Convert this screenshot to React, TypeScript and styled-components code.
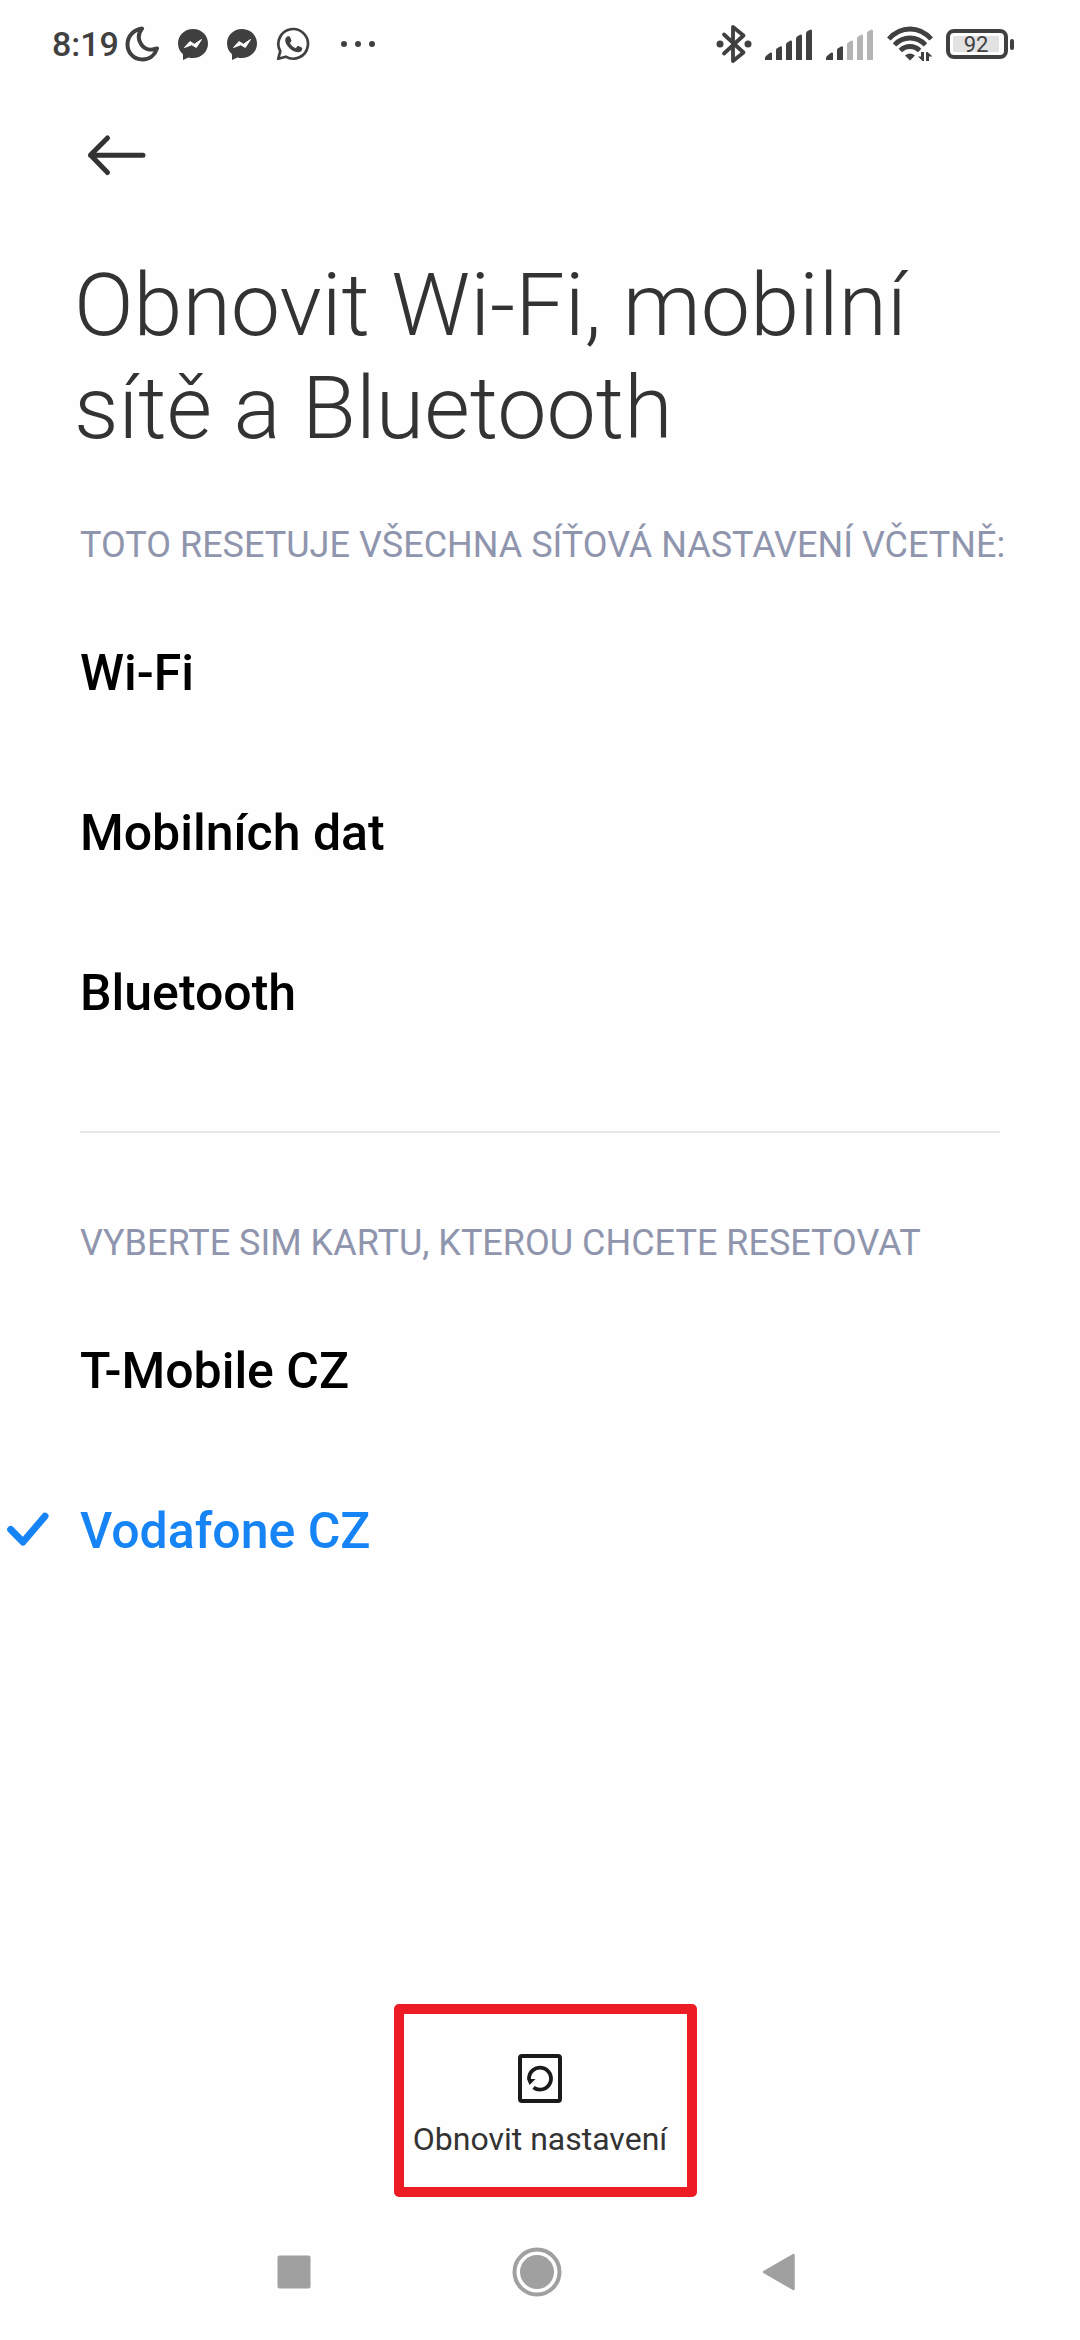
import React, { useState } from "react";
import styled, { createGlobalStyle } from "styled-components";

const GlobalStyle = createGlobalStyle`
  *, *::before, *::after { box-sizing: border-box; }
  html, body, #root { height: 100%; }
  body {
    margin: 0;
    background: #fefefe;
    font-family: Roboto, "Noto Sans", sans-serif;
    color: #333333;
  }
  button { font: inherit; color: inherit; background: none; border: 0; padding: 0; cursor: pointer; }
  svg { display: block; flex: none; }
`;

const Screen = styled.div`
  display: flex;
  flex-direction: column;
  min-height: 100vh;
`;

const StatusBar = styled.header`
  display: flex;
  justify-content: space-between;
  align-items: center;
  height: 88px;
  padding: 0 66px 0 52px;
  color: #404040;
`;

const StatusGroup = styled.div<{ $gap: number }>`
  display: flex;
  align-items: center;
  gap: ${(p) => p.$gap}px;
`;

const Clock = styled.time`
  font-size: 34px;
  font-weight: 500;
  line-height: 40px;
`;

const ClockGroup = styled.div`
  display: flex;
  align-items: center;
  gap: 6px;
`;

const More = styled.div`
  padding-left: 12px;
`;

const Battery = styled.div`
  display: flex;
  align-items: center;
  gap: 2px;
`;

const BatteryBody = styled.div`
  width: 62px;
  height: 30px;
  padding: 3px;
  border: 4px solid #404040;
  border-radius: 8px;
`;

const BatteryLevel = styled.div`
  display: flex;
  justify-content: center;
  width: 46px;
  height: 16px;
  background: #e2e2e2;
  font-size: 22px;
  line-height: 18px;
`;

const BatteryTip = styled.div`
  width: 4px;
  height: 11px;
  border-radius: 2px;
  background: #404040;
`;

const Toolbar = styled.nav`
  display: flex;
  padding: 44px 84px 0;
`;

const IconButton = styled.button`
  display: flex;
  align-items: center;
  justify-content: center;
`;

const Title = styled.h1`
  margin: 0;
  padding: 75px 74px 0;
  font-size: 88px;
  font-weight: 300;
  line-height: 103px;
`;

const Content = styled.main`
  flex: 1;
  padding-top: 62px;
`;

const Section = styled.section`
  display: flex;
  flex-direction: column;
`;

const SectionLabel = styled.h2`
  margin: 0;
  padding: 0 60px 0 80px;
  font-size: 36px;
  font-weight: 400;
  line-height: 48px;
  color: #8f95ad;
`;

const List = styled.ul`
  margin: 0;
  padding: 24px 0 0;
  list-style: none;
`;

const Item = styled.li`
  display: flex;
  align-items: center;
  height: 160px;
  padding: 0 80px;
  font-size: 50px;
  font-weight: 500;
  color: #000000;
`;

const Divider = styled.hr`
  height: 2px;
  margin: 58px 80px 86px;
  border: 0;
  background: #e6e6e6;
`;

const Option = styled.label<{ $checked: boolean }>`
  display: flex;
  align-items: center;
  height: 160px;
  padding-right: 80px;
  font-size: 50px;
  font-weight: 500;
  color: ${(p) => (p.$checked ? "#1684f5" : "#000000")};
  cursor: pointer;
`;

const Radio = styled.input`
  flex: none;
  appearance: none;
  width: 0;
  height: 0;
  margin: 0;
`;

const CheckSlot = styled.span`
  flex: none;
  width: 80px;
  padding-left: 6px;
`;

const SimList = styled.div`
  padding-top: 24px;
`;

const Actions = styled.footer`
  display: flex;
  justify-content: center;
`;

const ResetButton = styled.button`
  position: relative;
  display: flex;
  flex-direction: column;
  align-items: center;
  gap: 16px;
  padding: 50px 19px 39px;
  font-size: 32px;
  line-height: 38px;
`;

const Highlight = styled.span`
  position: absolute;
  inset: 0 -11px 0 0;
  border: 10px solid #ed1c24;
  border-radius: 5px;
  pointer-events: none;
`;

const NavBar = styled.nav`
  display: flex;
  justify-content: space-between;
  align-items: center;
  height: 143px;
  padding: 7px 284px 0 277px;
`;

const BackArrow = () => (
  <svg width="62" height="46" viewBox="0 0 62 46" fill="none" stroke="#333333" strokeWidth="5" strokeLinecap="round" strokeLinejoin="round">
    <path d="M23.500 6 6.500 23 23.500 40.500M6.500 23.300H59" />
  </svg>
);

const Moon = () => (
  <svg width="34" height="36" viewBox="0 0 34 36" fill="none" stroke="#404040" strokeWidth="4" strokeLinejoin="round">
    <path d="M17 2.500C9 3.500 2.500 10 2.500 18.500 2.500 27 9 33.500 17.500 33.500 24.500 33.500 30 29 32 22.500 25 25 19 23 16 18 12.500 12.500 13.500 7 17 2.500Z" />
  </svg>
);

const Messenger = () => (
  <svg width="30" height="31" viewBox="0 0 30 31">
    <path fill="#404040" d="M15 0C6.500 0 0 6.300 0 14.500 0 18.800 1.800 22.500 5 25.200V31L10.500 28.500C12 28.900 13.500 29 15 29 23.500 29 30 22.700 30 14.500S23.500 0 15 0Z" />
    <path fill="#fefefe" stroke="#fefefe" strokeWidth="1" strokeLinejoin="round" d="M6.500 18.500 12 12.500 16.300 15.300 23.500 10.500 18.300 18.500 13.700 15.800Z" />
  </svg>
);

const WhatsApp = () => (
  <svg width="34" height="34" viewBox="0 0 34 34">
    <path fill="none" stroke="#404040" strokeWidth="2.700" strokeLinejoin="round" d="M2.200 31.800 4.300 24.200A14.800 14.800 0 1 1 9.800 29.700Z" />
    <path fill="#404040" d="M11.700 9.200h1.300c.5 0 .8.300 1 .7l1.400 3.300c.2.500 0 .9-.3 1.300l-1.200 1.400c1.400 2.500 3.300 4.200 5.900 5.300l1.500-1.900c.3-.4.700-.5 1.200-.3l3.200 1.600c.5.200.7.600.6 1.100-.2 2.300-2.300 3.700-4.600 3.600-5.900-.6-12.100-6.600-12.500-11.800 0-1.700.9-3.800 2.500-4.300Z" />
  </svg>
);

const Dots = () => (
  <svg width="34" height="8" viewBox="0 0 34 8" fill="#404040">
    <circle cx="3" cy="4" r="3" />
    <circle cx="17" cy="4" r="3" />
    <circle cx="31" cy="4" r="3" />
  </svg>
);

const Bluetooth = () => (
  <svg width="36" height="40" viewBox="0 0 36 40">
    <path fill="none" stroke="#404040" strokeWidth="3.800" strokeLinejoin="round" strokeLinecap="round" d="M8 10.500 27.500 28.500 17 37V3L27.500 11.500 8 29.500" />
    <circle cx="4" cy="20" r="3.500" fill="#404040" />
    <circle cx="32" cy="20" r="3.500" fill="#404040" />
  </svg>
);

const bars = [
  "M0 31V29Q0 27.500 1.500 26.500L5 23.800Q7 23 7 24.500V31Z",
  "M11 31V21Q11 19.500 12.500 19L15.500 17.200Q17 17 17 18.500V31Z",
  "M21 31V15.500Q21 14 22.500 13.200L25.500 11.600Q27 11.300 27 13V31Z",
  "M31 31V9.500Q31 8 32.500 7.300L35.500 5.600Q37 5.500 37 7V31Z",
  "M41 31V4.500Q41 2.800 42.500 2L45.500.4Q47 .2 47 2V31Z",
];

const Signal = ({ level }: { level: number }) => (
  <svg width="48" height="31" viewBox="0 0 48 31">
    {bars.map((d, i) => (
      <path key={d} d={d} fill={i < level ? "#404040" : "#b4b4b4"} />
    ))}
  </svg>
);

const Wifi = () => (
  <svg width="46" height="36" viewBox="0 0 46 36">
    <g fill="none" stroke="#404040" strokeWidth="4.800">
      <path d="M1.800 13Q11 3 23 3T44.200 13" />
      <path d="M7.500 18.800Q14 12 23 12T38.500 18.800" />
      <path d="M13.300 24.500Q17.500 20.500 23 20.500T32.700 24.500" />
    </g>
    <path fill="#404040" d="M18 29.500Q23 25.500 28 29.500L23 34.500Z" />
    <path fill="#404040" d="M34 26h3v9h-1.500L31 30.500h3ZM39 35V26h1.500L45.500 30.500H42V35Z" />
  </svg>
);

const Check = () => (
  <svg width="44" height="40" viewBox="0 0 44 40" fill="none" stroke="#1684f5" strokeWidth="7" strokeLinecap="round" strokeLinejoin="round">
    <path d="M4.700 18.500 17 31 39 5.200" />
  </svg>
);

const ResetIcon = () => (
  <svg width="44" height="50" viewBox="0 0 44 50">
    <rect x="2" y="2" width="40" height="45" rx="2" fill="none" stroke="#1a1a1a" strokeWidth="4" />
    <path fill="none" stroke="#1a1a1a" strokeWidth="3.800" d="M11 25A11 11 0 1 1 15.500 33.500" />
    <path fill="#1a1a1a" d="M9 25h8.500L11.500 31Z" />
  </svg>
);

const RecentsIcon = () => (
  <svg width="34" height="34" viewBox="0 0 34 34">
    <rect x=".5" y=".5" width="33" height="33" rx="2" fill="#a0a0a0" />
  </svg>
);

const HomeIcon = () => (
  <svg width="50" height="50" viewBox="0 0 50 50">
    <circle cx="25" cy="25" r="22.500" fill="none" stroke="#a0a0a0" strokeWidth="4" />
    <circle cx="25" cy="25" r="17" fill="#a0a0a0" />
  </svg>
);

const NavBackIcon = () => (
  <svg width="34" height="38" viewBox="0 0 34 38">
    <path d="M2 19 31.500 2V36Z" fill="#a0a0a0" stroke="#a0a0a0" strokeWidth="2.500" strokeLinejoin="round" />
  </svg>
);

const resetItems = ["Wi-Fi", "Mobilních dat", "Bluetooth"];
const sims = ["T-Mobile CZ", "Vodafone CZ"];

export default function App() {
  const [sim, setSim] = useState("Vodafone CZ");

  return (
    <Screen>
      <GlobalStyle />
      <StatusBar>
        <StatusGroup $gap={19}>
          <ClockGroup>
            <Clock>8:19</Clock>
            <Moon />
          </ClockGroup>
          <Messenger />
          <Messenger />
          <WhatsApp />
          <More>
            <Dots />
          </More>
        </StatusGroup>
        <StatusGroup $gap={13}>
          <Bluetooth />
          <Signal level={5} />
          <Signal level={2} />
          <Wifi />
          <Battery>
            <BatteryBody>
              <BatteryLevel>92</BatteryLevel>
            </BatteryBody>
            <BatteryTip />
          </Battery>
        </StatusGroup>
      </StatusBar>

      <Toolbar>
        <IconButton type="button" aria-label="Zpět">
          <BackArrow />
        </IconButton>
      </Toolbar>

      <Title>Obnovit Wi-Fi, mobilní sítě a Bluetooth</Title>

      <Content>
        <Section>
          <SectionLabel>TOTO RESETUJE VŠECHNA SÍŤOVÁ NASTAVENÍ VČETNĚ:</SectionLabel>
          <List>
            {resetItems.map((name) => (
              <Item key={name}>{name}</Item>
            ))}
          </List>
        </Section>
        <Divider />
        <Section>
          <SectionLabel id="sim-label">VYBERTE SIM KARTU, KTEROU CHCETE RESETOVAT</SectionLabel>
          <SimList role="radiogroup" aria-labelledby="sim-label">
            {sims.map((name) => (
              <Option key={name} $checked={sim === name}>
                <Radio type="radio" name="sim" checked={sim === name} onChange={() => setSim(name)} />
                <CheckSlot>{sim === name && <Check />}</CheckSlot>
                {name}
              </Option>
            ))}
          </SimList>
        </Section>
      </Content>

      <Actions>
        <ResetButton type="button">
          <ResetIcon />
          Obnovit nastavení
          <Highlight />
        </ResetButton>
      </Actions>

      <NavBar>
        <IconButton type="button" aria-label="Poslední aplikace">
          <RecentsIcon />
        </IconButton>
        <IconButton type="button" aria-label="Domů">
          <HomeIcon />
        </IconButton>
        <IconButton type="button" aria-label="Zpět">
          <NavBackIcon />
        </IconButton>
      </NavBar>
    </Screen>
  );
}
